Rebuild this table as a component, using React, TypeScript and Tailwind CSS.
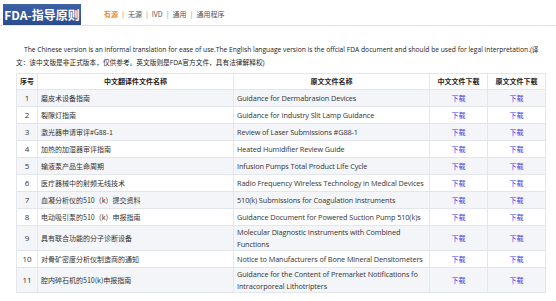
import React from "react";

const rows = [
  { cn: "磨皮术设备指南", en: ["Guidance for Dermabrasion Devices"] },
  { cn: "裂隙灯指南", en: ["Guidance for Industry Slit Lamp Guidance"] },
  { cn: "激光器申请审评#G88-1", en: ["Review of Laser Submissions #G88-1"] },
  { cn: "加热的加湿器审评指南", en: ["Heated Humidifier Review Guide"] },
  { cn: "输液泵产品生命周期", en: ["Infusion Pumps Total Product Life Cycle"] },
  { cn: "医疗器械中的射频无线技术", en: ["Radio Frequency Wireless Technology in Medical Devices"] },
  { cn: "血凝分析仪的510（k）提交资料", en: ["510(k) Submissions for Coagulation Instruments"] },
  { cn: "电动吸引泵的510（k）申报指南", en: ["Guidance Document for Powered Suction Pump 510(k)s"] },
  { cn: "具有联合功能的分子诊断设备", en: ["Molecular Diagnostic Instruments with Combined", "Functions"] },
  { cn: "对骨矿密度分析仪制造商的通知", en: ["Notice to Manufacturers of Bone Mineral Densitometers"] },
  { cn: "腔内碎石机的510(k)申报指南", en: ["Guidance for the Content of Premarket Notifications fo", "Intracorporeal Lithotripters"] },
];

const cnFont = "font-['Noto_Sans_CJK_SC',sans-serif]";

export default function App() {
  return (
    <div className="w-[556px] h-[301px] bg-white overflow-hidden font-['Open_Sans','Noto_Sans_CJK_SC',sans-serif]">
      <div className="flex items-end border-b border-[#e2e4e8] h-[26px]">
        <div className="ml-[3px] w-[78px] h-[21px] bg-gradient-to-b from-[#3d62a6] to-[#2b4c8c] flex items-center justify-center text-white font-bold text-[12px] leading-none font-['Noto_Sans_CJK_SC',sans-serif]">
          FDA-指导原则
        </div>
        <div className={`ml-[23px] mb-[7px] text-[7px] leading-none text-[#555] ${cnFont}`}>
          <span className="text-[#f08a1c] font-bold">有源</span>
          <span className="mx-[4px] text-[#888]">|</span>
          <span>无源</span>
          <span className="mx-[4px] text-[#888]">|</span>
          <span>IVD</span>
          <span className="mx-[4px] text-[#888]">|</span>
          <span>通用</span>
          <span className="mx-[4px] text-[#888]">|</span>
          <span>通用程序</span>
        </div>
      </div>

      <p className="mt-[17px] pl-[16px] pr-[10px] indent-[8px] text-[6.7px] leading-[13px] text-[#222]">
        The Chinese version is an informal translation for ease of use.The English language version is the offcial FDA document and should be used for legal interpretation.(译文：该中文版是非正式版本，仅供参考。英文版则是FDA官方文件，具有法律解释权)
      </p>

      <table className="mt-[4px] ml-[16px] w-[529px] table-fixed border-collapse border border-[#e3e6ea] text-[#333]">
        <colgroup>
          <col className="w-[21px]" />
          <col className="w-[196px]" />
          <col className="w-[196px]" />
          <col className="w-[58px]" />
          <col className="w-[58px]" />
        </colgroup>
        <thead>
          <tr className={`h-[16px] text-[7px] font-bold text-[#222] ${cnFont}`}>
            <th className="border border-[#e3e6ea] px-[3px] text-left">序号</th>
            <th className="border border-[#e3e6ea]">中文翻译件文件名称</th>
            <th className="border border-[#e3e6ea]">原文文件名称</th>
            <th className="border border-[#e3e6ea]">中文文件下载</th>
            <th className="border border-[#e3e6ea]">原文文件下载</th>
          </tr>
        </thead>
        <tbody>
          {rows.map((r, i) => (
            <tr key={i} className={`h-[17px] ${i % 2 === 0 ? "bg-[#f3f5f8]" : "bg-white"}`}>
              <td className="border border-[#e3e6ea] text-center text-[8px] leading-[12px]">{i + 1}</td>
              <td className={`border border-[#e3e6ea] pl-[3px] text-[7px] leading-[12px] ${cnFont}`}>{r.cn}</td>
              <td className="border border-[#e3e6ea] pl-[3px] text-[7.3px] tracking-[-0.1px] leading-[12px] whitespace-nowrap">
                {r.en.map((l, j) => (
                  <div key={j}>{l}</div>
                ))}
              </td>
              <td className={`border border-[#e3e6ea] text-center text-[7px] ${cnFont}`}>
                <a className="text-[#3a3ee0]">下载</a>
              </td>
              <td className={`border border-[#e3e6ea] text-center text-[7px] ${cnFont}`}>
                <a className="text-[#3a3ee0]">下载</a>
              </td>
            </tr>
          ))}
        </tbody>
      </table>
    </div>
  );
}
